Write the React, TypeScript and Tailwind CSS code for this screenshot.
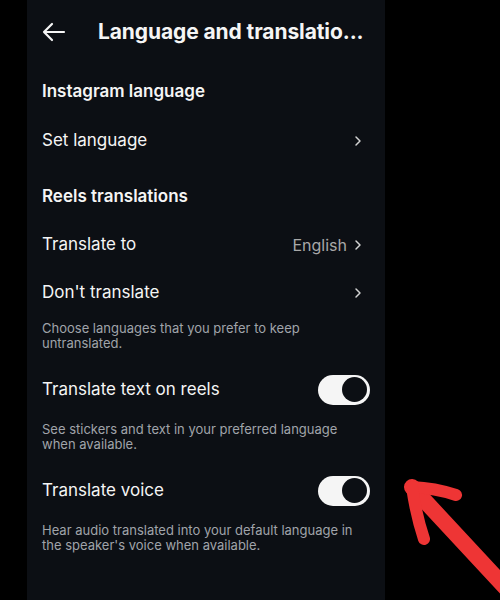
import { ChevronRight } from "lucide-react";

const font = { fontFamily: "Inter, 'Noto Sans', sans-serif" };

function Toggle() {
  return (
    <div className="w-[52px] h-[30px] rounded-full bg-[#f5f5f5] flex items-center justify-end pr-[3px]">
      <div className="w-[25px] h-[25px] rounded-full bg-[#0c0f14]" />
    </div>
  );
}

function NavRow({ label, value }: { label: string; value?: string }) {
  return (
    <div className="h-[48px] pb-[3px] flex items-center justify-between px-[15px]">
      <span className="text-[17px] text-[#f5f5f5]">{label}</span>
      <span className="flex items-center gap-[3px] mr-[4px]">
        {value && <span className="text-[16px] text-[#a8a8a8]">{value}</span>}
        <ChevronRight className="w-[16px] h-[16px] text-[#d4d4d4]" strokeWidth={2.2} />
      </span>
    </div>
  );
}

export default function App() {
  return (
    <div className="relative w-[500px] h-[600px] bg-black overflow-hidden" style={font}>
      <div className="ml-[27px] w-[358px] h-[600px] bg-[#0c0f14]">
        <div className="h-[64px] flex items-center px-[15px]">
          <svg width="24" height="24" viewBox="0 0 24 24" fill="none" stroke="#f5f5f5" strokeWidth="2.2" strokeLinecap="round" strokeLinejoin="round">
            <path d="M22 12H2M10 4l-8 8 8 8" />
          </svg>
          <h1 className="ml-[32px] text-[21px] font-bold text-[#f5f5f5] tracking-[-0.1px]">Language and translatio...</h1>
        </div>

        <div className="h-[54px] pt-[1px] flex items-center px-[15px]">
          <span className="text-[17px] font-semibold text-[#f5f5f5]">Instagram language</span>
        </div>
        <NavRow label="Set language" />

        <div className="h-[56px] pt-[6px] flex items-center px-[15px]">
          <span className="text-[17px] font-semibold text-[#f5f5f5]">Reels translations</span>
        </div>
        <NavRow label="Translate to" value="English" />
        <NavRow label="Don't translate" />
        <p className="pt-[3px] px-[15px] text-[13px] leading-[15px] text-[#a0a4aa]">
          Choose languages that you prefer to keep
          <br />
          untranslated.
        </p>

        <div className="mt-[16px] h-[48px] pb-[3px] flex items-center justify-between px-[15px]">
          <span className="text-[17px] text-[#f5f5f5]">Translate text on reels</span>
          <Toggle />
        </div>
        <p className="mt-[7px] px-[15px] text-[13px] leading-[15px] text-[#a0a4aa]">
          See stickers and text in your preferred language
          <br />
          when available.
        </p>

        <div className="mt-[16px] h-[48px] pb-[3px] flex items-center justify-between px-[15px]">
          <span className="text-[17px] text-[#f5f5f5]">Translate voice</span>
          <Toggle />
        </div>
        <p className="mt-[7px] px-[15px] text-[13px] leading-[15px] text-[#a0a4aa]">
          Hear audio translated into your default language in
          <br />
          the speaker's voice when available.
        </p>
      </div>

      <svg className="absolute left-[390px] top-[470px]" width="110" height="130" viewBox="0 0 110 130" fill="none" stroke="#ee3535" strokeLinecap="round" strokeLinejoin="round">
        <path d="M22 17L125 128" strokeWidth="16" />
        <path d="M22 17Q45 18 66 25" strokeWidth="12" />
        <path d="M22 17Q26 45 34 69" strokeWidth="12" />
      </svg>
    </div>
  );
}
